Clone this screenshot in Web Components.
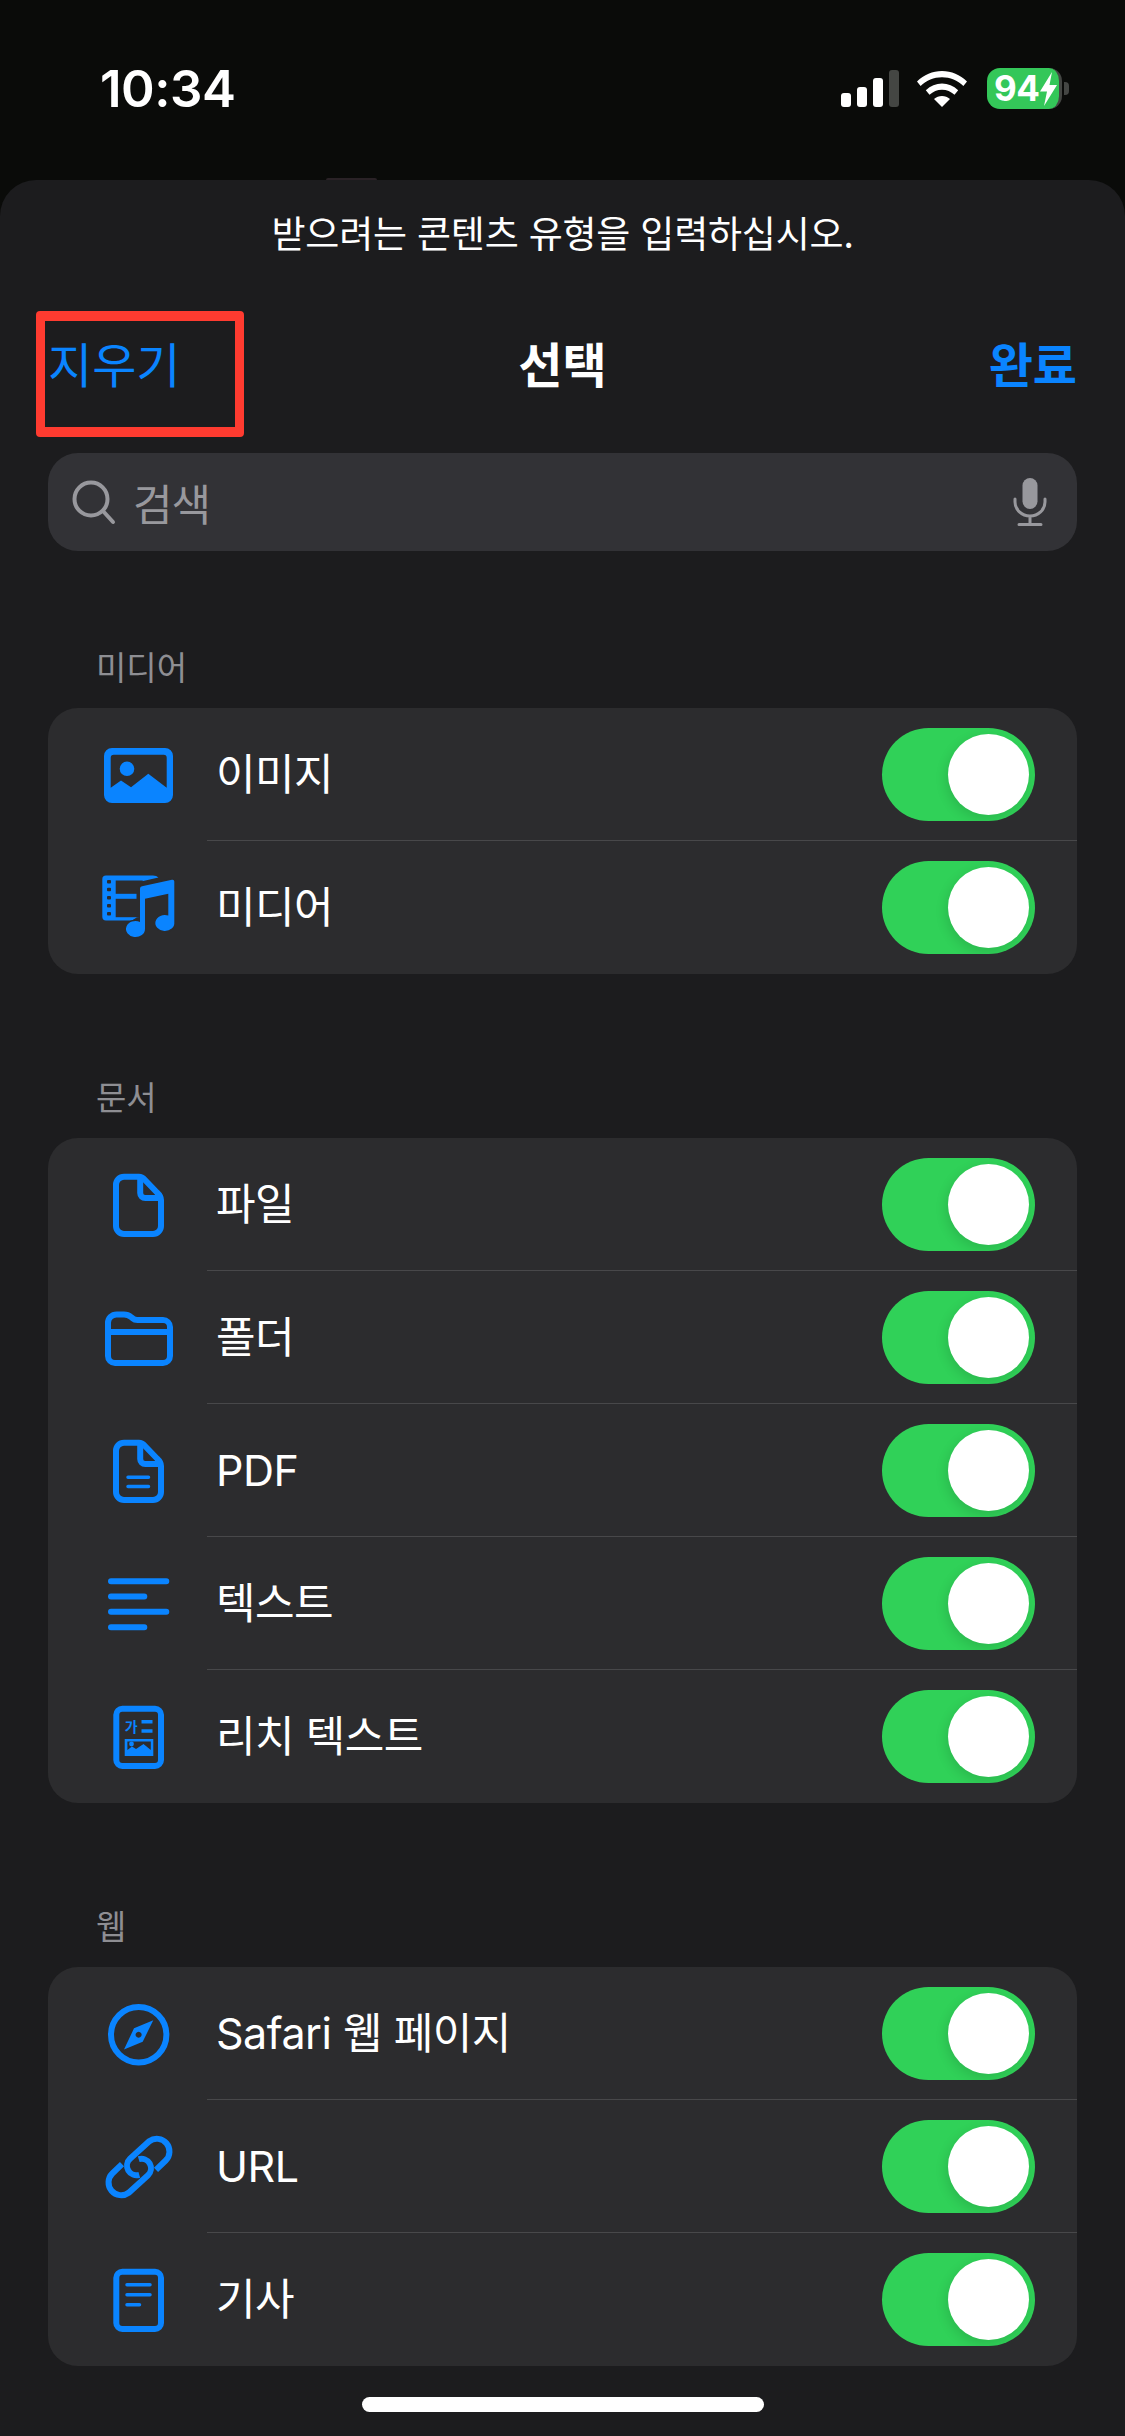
<!DOCTYPE html>
<html lang="ko">
<head>
<meta charset="utf-8">
<title>선택</title>
<style>
  html, body { margin: 0; padding: 0; }
  body {
    width: 1125px;
    height: 2436px;
    overflow: hidden;
    background: #0a0b09;
    color: #fff;
    font-family: Inter, "Noto Sans CJK KR", sans-serif;
  }
</style>
</head>
<body>
<status-bar time="10:34" level="94"></status-bar>
<app-sheet>
  <span slot="prompt">받으려는 콘텐츠 유형을 입력하십시오.</span>
  <nav-bar slot="header" title="선택" left="지우기" right="완료"></nav-bar>
  <search-field slot="header" placeholder="검색"></search-field>
  <settings-group label="미디어">
    <settings-row icon="image">이미지</settings-row>
    <settings-row icon="media">미디어</settings-row>
  </settings-group>
  <settings-group label="문서">
    <settings-row icon="file">파일</settings-row>
    <settings-row icon="folder">폴더</settings-row>
    <settings-row icon="pdf">PDF</settings-row>
    <settings-row icon="text">텍스트</settings-row>
    <settings-row icon="rich">리치 텍스트</settings-row>
  </settings-group>
  <settings-group label="웹">
    <settings-row icon="safari">Safari 웹 페이지</settings-row>
    <settings-row icon="link">URL</settings-row>
    <settings-row icon="article">기사</settings-row>
  </settings-group>
</app-sheet>

<script>
const BLUE = '#0a84ff';
const CARD = '#2c2c2e';

const pageOutline = `<path d="M31 16.8H45Q48 16.8 51 20L63 32.5Q67 36.2 67 40V66a8 8 0 0 1-8 8H30a8 8 0 0 1-8-8V25a8 8 0 0 1 8-8.2z"/>`;
const pageFold = `<path d="M46.2 17V33a5 5 0 0 0 5 5H66"/>`;
const sheetOutline = `<rect x="22.3" y="16.8" width="44.7" height="57.2" rx="6"/>`;
const linkHalf = `<path d="M62 47.800 71.700 38.500A12.700 12.700 0 0 0 55.300 19.200L36 36.800A9.500 9.500 0 0 0 45.300 52.800"/>`;

const ICONS = {
  image: `<path fill="${BLUE}" fill-rule="evenodd" d="M18 18H71a8 8 0 0 1 8 8V65a8 8 0 0 1-8 8H18a8 8 0 0 1-8-8V26a8 8 0 0 1 8-8zM19.700 24.800a3 3 0 0 0-3 3V57.800L27 50.500 37 57.200 54.300 43.800 72.700 57.800V27.800a3 3 0 0 0-3-3z"/>
    <circle cx="33" cy="38.800" r="7.300" fill="${BLUE}"/>`,
  media: `<path fill="${BLUE}" d="M12 12.500H59Q62.500 12.500 64.500 14.500L47 18.500V54.200H43L38 57.500H12a3.700 3.700 0 0 1-3.700-3.700V16.200a3.700 3.700 0 0 1 3.700-3.700z"/>
    <g fill="${CARD}"><rect x="21.700" y="17.500" width="27" height="13.300"/><rect x="21.700" y="35.800" width="27" height="18.400"/><rect x="42.500" y="30" width="6" height="7"/>
      <rect x="13" y="17" width="4" height="3.600" rx="1"/><rect x="13" y="24.700" width="4" height="3.600" rx="1"/><rect x="13" y="33" width="4" height="3.600" rx="1"/><rect x="13" y="41" width="4" height="3.600" rx="1"/><rect x="13" y="49" width="4" height="3.600" rx="1"/></g>
    <path fill="${BLUE}" stroke="${CARD}" stroke-width="3" paint-order="stroke" d="M46 25.500Q46 23.600 48 23.200L78 16.700Q80.300 16.300 80.300 18.500V59.200A9.500 8 0 1 1 74.300 52.500V30.800L51 35.800V65.800A9.500 8 0 1 1 46 59Z"/>`,
  file: `<g fill="none" stroke="${BLUE}" stroke-width="6" stroke-linejoin="round">${pageOutline}${pageFold}</g>`,
  folder: `<g fill="none" stroke="${BLUE}" stroke-width="6" stroke-linejoin="round"><path d="M14 30a8.500 8.500 0 0 1 8.500-8.500H30q4 0 7 2.500l1.500 1.200q2 1.800 5 1.800H69a7 7 0 0 1 7 7V63a7 7 0 0 1-7 7H21a7 7 0 0 1-7-7z"/><path d="M14 39H76"/></g>`,
  pdf: `<g fill="none" stroke="${BLUE}" stroke-width="6" stroke-linejoin="round">${pageOutline}${pageFold}</g>
    <path d="M34 51.200H54.500M34 60.500H54.500" fill="none" stroke="${BLUE}" stroke-width="3.500" stroke-linecap="round"/>`,
  text: `<path d="M17 22.200H72.300M17 37.500H50.300M17 52.800H72.300M17 68.200H50.300" fill="none" stroke="${BLUE}" stroke-width="6" stroke-linecap="round"/>`,
  rich: `<g fill="none" stroke="${BLUE}" stroke-width="6">${sheetOutline}</g>
    <text x="37.300" y="39.500" text-anchor="middle" font-size="14" font-weight="700" fill="${BLUE}" font-family="'Noto Sans CJK KR', sans-serif">가</text>
    <path d="M47.500 29.800H58.500M47.500 39H58.500" fill="none" stroke="${BLUE}" stroke-width="3.400"/>
    <path fill="${BLUE}" fill-rule="evenodd" d="M30.700 47H59.300V64H30.700zM33.400 49.400V58L38 54.600 42 57 49.500 52 56.800 58V49.400z"/>
    <circle cx="37.500" cy="52" r="2.400" fill="${BLUE}"/>`,
  safari: `<circle cx="44.700" cy="45.800" r="27.700" fill="none" stroke="${BLUE}" stroke-width="6"/>
    <path fill="${BLUE}" fill-rule="evenodd" d="M59.300 31.200 48.700 52.800 30 60.500 40 39.300zM44.600 42.800a3 3 0 1 0 .01 0z"/>`,
  link: `<g fill="none" stroke="${BLUE}" stroke-width="6">${linkHalf}<g transform="rotate(180 45 45)">${linkHalf}</g></g>`,
  article: `<g fill="none" stroke="${BLUE}" stroke-width="6">${sheetOutline}</g>
    <path d="M33 29.800H56M33 39.800H56M33 49.800H45.500" fill="none" stroke="${BLUE}" stroke-width="3.500" stroke-linecap="round"/>`
};

class StatusBar extends HTMLElement {
  constructor() {
    super();
    this.attachShadow({ mode: 'open' });
  }
  connectedCallback() {
    const time = this.getAttribute('time') || '';
    const level = this.getAttribute('level') || '';
    this.shadowRoot.innerHTML = `
      <style>
        :host { display: flex; align-items: center; justify-content: space-between; box-sizing: border-box; height: 180px; padding: 0 56px 3px 100px; }
        .time { font: 600 51px/1 Inter, sans-serif; letter-spacing: -.5px; color: #fff; }
        .right { display: flex; align-items: center; }
        .signal { display: flex; align-items: flex-end; gap: 6px; height: 37px; margin-right: 18px; }
        .signal i { display: block; width: 10px; background: #fff; border-radius: 3px; }
        .signal i:last-child { background: #444643; }
        .wifi { display: block; margin-right: 20px; }
        .battery { display: flex; align-items: center; box-sizing: border-box; width: 75px; height: 41px; padding-left: 7px; background: #34c759; border-radius: 13px; border-right: 3px solid #444643; }
        .battery span { font: 700 35px/1 Inter, sans-serif; letter-spacing: -.5px; color: #fff; }
        .cap { width: 5px; height: 13px; margin-left: 2px; background: #444643; border-radius: 0 4px 4px 0; }
      </style>
      <div class="time">${time}</div>
      <div class="right">
        <div class="signal"><i style="height:14px"></i><i style="height:20px"></i><i style="height:29px"></i><i style="height:37px"></i></div>
        <svg class="wifi" width="50" height="36" viewBox="0 0 50 36"><path fill="#fff" d="M25 0C15.500 0 7 3.800 0 10.500L3.600 15C9.500 9.400 16.800 6.200 25 6.200S40.500 9.400 46.400 15L50 10.500C43 3.800 34.500 0 25 0ZM25 12.500C19 12.500 13.500 14.900 8.800 19.200L12.500 23.800C16 20.500 20.300 18.700 25 18.700S34 20.500 37.500 23.800L41.200 19.200C36.500 14.900 31 12.500 25 12.500ZM25 25C22 25 19.400 26 17 28L25 36L33 28C30.600 26 28 25 25 25Z"/></svg>
        <div class="battery"><span>${level}</span><svg width="19" height="34" viewBox="0 0 19 34"><path fill="#fff" d="M13 0 1 19.500H8L5 34 18 13H10.500Z"/></svg></div>
        <div class="cap"></div>
      </div>`;
  }
}

class AppSheet extends HTMLElement {
  constructor() {
    super();
    this.attachShadow({ mode: 'open' }).innerHTML = `
      <style>
        :host { display: flex; flex-direction: column; position: relative; box-sizing: border-box; height: 2256px; padding: 0 48px; background: #1c1c1e; border-radius: 36px 36px 0 0; }
        .peek { position: absolute; left: 326px; top: -2px; width: 51px; height: 2px; background: #2a2226; border-radius: 3px 3px 0 0; }
        .prompt { flex: none; height: 104px; display: flex; align-items: center; justify-content: center; font: 400 37px/1 "Noto Sans CJK KR", sans-serif; letter-spacing: -.2px; color: #fff; }
        .groups { flex: none; display: flex; flex-direction: column; gap: 98px; }
        .home { position: absolute; left: 362px; top: 2217px; width: 402px; height: 15px; background: #fff; border-radius: 8px; }
      </style>
      <div class="peek"></div>
      <div class="prompt"><slot name="prompt"></slot></div>
      <slot name="header"></slot>
      <div class="groups"><slot></slot></div>
      <div class="home"></div>`;
  }
}

class NavBar extends HTMLElement {
  constructor() {
    super();
    this.attachShadow({ mode: 'open' });
  }
  connectedCallback() {
    this.shadowRoot.innerHTML = `
      <style>
        :host { display: grid; flex: none; grid-template-columns: 1fr auto 1fr; align-items: center; position: relative; box-sizing: border-box; height: 169px; padding-bottom: 13px; font: 400 48px/1 "Noto Sans CJK KR", sans-serif; }
        .box { position: absolute; left: -12px; top: 27px; width: 190px; height: 106px; border: solid #ff3b30; border-width: 10px 9px; border-radius: 4px; }
        a { color: ${BLUE}; }
        .title { color: #fff; font-weight: 700; }
        .right { justify-self: end; font-weight: 700; }
      </style>
      <a>${this.getAttribute('left')}</a>
      <div class="title">${this.getAttribute('title')}</div>
      <a class="right">${this.getAttribute('right')}</a>
      <div class="box"></div>`;
  }
}

class SearchField extends HTMLElement {
  constructor() {
    super();
    this.attachShadow({ mode: 'open' });
  }
  connectedCallback() {
    this.shadowRoot.innerHTML = `
      <style>
        :host { display: flex; flex: none; align-items: center; box-sizing: border-box; height: 98px; margin-bottom: 91px; padding: 0 30px 0 24px; background: #323236; border-radius: 30px; color: #98989d; }
        .label { flex: 1; margin-left: 17px; font: 400 43px/1 "Noto Sans CJK KR", sans-serif; letter-spacing: -1px; }
        svg { display: block; }
      </style>
      <svg width="44" height="45" viewBox="0 0 44 45" fill="none" stroke="#98989d" stroke-width="4" stroke-linecap="round"><circle cx="19" cy="19" r="16.500"/><path d="M31 31 41 42"/></svg>
      <div class="label">${this.getAttribute('placeholder')}</div>
      <svg width="34" height="48" viewBox="0 0 34 48" fill="none" stroke="#98989d" stroke-width="3"><rect x="9.500" y="0" width="15" height="31" rx="7.500" fill="#98989d" stroke="none"/><path d="M2 21V24A15 14 0 0 0 32 24V21M17 38V45M6 46.500H28" stroke-linecap="round"/></svg>`;
  }
}

class SettingsGroup extends HTMLElement {
  constructor() {
    super();
    this.attachShadow({ mode: 'open' });
  }
  connectedCallback() {
    this.shadowRoot.innerHTML = `
      <style>
        :host { display: block; }
        .label { height: 48px; margin-bottom: 18px; padding-left: 48px; font: 400 33px/48px "Noto Sans CJK KR", sans-serif; color: #8e8e93; }
        .card { background: ${CARD}; border-radius: 30px; overflow: hidden; }
      </style>
      <div class="label">${this.getAttribute('label')}</div>
      <div class="card"><slot></slot></div>`;
  }
}

class SettingsRow extends HTMLElement {
  constructor() {
    super();
    this.attachShadow({ mode: 'open' });
  }
  connectedCallback() {
    const icon = ICONS[this.getAttribute('icon')] || '';
    this.shadowRoot.innerHTML = `
      <style>
        :host { display: flex; height: 133px; }
        .icon { flex: none; display: flex; align-items: center; box-sizing: border-box; width: 159px; padding-left: 46px; }
        .icon svg { display: block; }
        .body { flex: 1; display: flex; align-items: center; justify-content: space-between; padding: 0 42px 0 9px; box-shadow: inset 0 -1px 0 #48484a; font: 400 43px/1 Inter, "Noto Sans CJK KR", sans-serif; letter-spacing: -.5px; color: #fff; }
        :host(:last-child) .body { box-shadow: none; }
      </style>
      <div class="icon"><svg width="90" height="90" viewBox="0 0 90 90">${icon}</svg></div>
      <div class="body"><span><slot></slot></span><ios-toggle></ios-toggle></div>`;
  }
}

class IosToggle extends HTMLElement {
  constructor() {
    super();
    this.attachShadow({ mode: 'open' }).innerHTML = `
      <style>
        :host { display: block; position: relative; flex: none; width: 153px; height: 93px; background: #30d158; border-radius: 47px; overflow: hidden; }
        .thumb { position: absolute; right: 6px; top: 6px; width: 81px; height: 81px; background: #fff; border-radius: 50%; box-shadow: -2px 4px 12px rgba(0,0,0,.12); }
      </style>
      <div class="thumb"></div>`;
  }
}

customElements.define('status-bar', StatusBar);
customElements.define('app-sheet', AppSheet);
customElements.define('nav-bar', NavBar);
customElements.define('search-field', SearchField);
customElements.define('settings-group', SettingsGroup);
customElements.define('settings-row', SettingsRow);
customElements.define('ios-toggle', IosToggle);
</script>
</body>
</html>
